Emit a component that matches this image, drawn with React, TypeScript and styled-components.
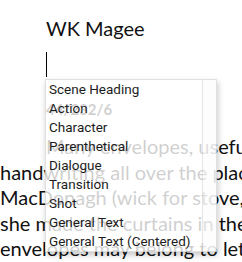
import React from 'react'
import styled, { createGlobalStyle } from 'styled-components'

const GlobalStyle = createGlobalStyle`
  html, body {
    margin: 0;
    padding: 0;
    background: #ffffff;
    overflow: hidden;
  }
`

const blockTypes = [
  'Scene Heading',
  'Action',
  'Character',
  'Parenthetical',
  'Dialogue',
  'Transition',
  'Shot',
  'General Text',
  'General Text (Centered)',
]

// the note as it wraps in the editor
const noteLines = [
  'Many envelopes, useful',
  'handwriting all over the place',
  'MacDonagh (wick for stove,',
  'she made the curtains in the',
  'envelopes may belong to letters',
]

export default function App() {
  return (
    <Page>
      <GlobalStyle />
      <Doc>
        <Para $indent $after={14}>Transcribed by</Para>
        <Para $indent $after={10}>WK Magee</Para>
        <Para $indent $after={20}>
          <Caret />
        </Para>
        <Ref $after={12}>44/232/6</Ref>
        <Para $indent>
          {noteLines.map((line, i) => (
            <React.Fragment key={i}>
              {line}
              {i < noteLines.length - 1 && <br />}
            </React.Fragment>
          ))}
        </Para>
      </Doc>

      <Menu>
        <MenuList>
          {blockTypes.map((t) => (
            <MenuItem key={t}>{t}</MenuItem>
          ))}
        </MenuList>
        <ScrollTrack />
      </Menu>
    </Page>
  )
}

const Page = styled.div`
  position: relative;
  width: 242px;
  height: 262px;
  overflow: hidden;
`

const Doc = styled.div`
  width: 320px;
  margin-top: -24px;
  font-family: Lato, 'Open Sans', sans-serif;
  font-size: 20px;
  line-height: 25.5px;
  color: #111111;
  white-space: nowrap;
`

const Para = styled.p<{ $indent?: boolean; $after?: number }>`
  margin: 0 0 ${(p) => p.$after ?? 0}px 0;
  text-indent: ${(p) => (p.$indent ? '46px' : '0')};
  min-height: 25.5px;
`

const Ref = styled.p<{ $after?: number }>`
  margin: 0 0 ${(p) => p.$after ?? 0}px 0;
  padding-left: 46px;
  font-size: 15px;
  font-weight: 700;
`

const Caret = styled.span`
  display: inline-block;
  width: 0;
  height: 25px;
  border-left: 1px solid #000;
  vertical-align: top;
  margin-top: 0.5px;
`

const Menu = styled.div`
  position: absolute;
  top: 79px;
  left: 45px;
  width: 170px;
  display: flex;
  background: rgba(255, 255, 255, 0.8);
  border: 1px solid rgba(0, 0, 0, 0.12);
  box-shadow: 1px 3px 6px rgba(0, 0, 0, 0.22);
`

const MenuList = styled.ul`
  flex: 1;
  margin: 0;
  padding: 0;
  list-style: none;
`

const MenuItem = styled.li`
  height: 19px;
  padding-left: 3px;
  font-family: Roboto, 'Liberation Sans', sans-serif;
  font-size: 13.5px;
  line-height: 19px;
  color: #1c1c1c;
  white-space: nowrap;
`

const ScrollTrack = styled.div`
  width: 13px;
  border-left: 1px solid rgba(0, 0, 0, 0.09);
  background: rgba(250, 250, 250, 0.4);
`
